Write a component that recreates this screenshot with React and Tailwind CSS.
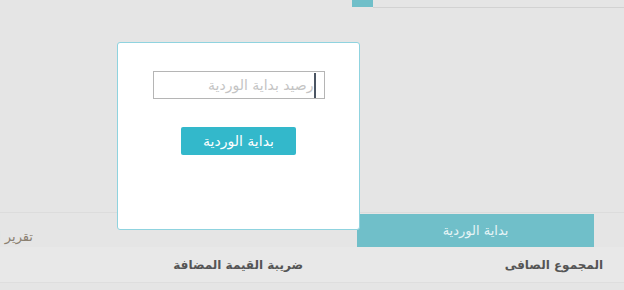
import React from "react";

const font = { fontFamily: '"DejaVu Sans", "Noto Sans", sans-serif' };

function ShiftModal() {
  return (
    <div className="absolute left-[117px] top-[42px] w-[243px] h-[188px] bg-white border border-[#8fd3df] rounded-[3px] flex flex-col items-center">
      <div className="mt-[28px] w-[172px] h-[28px] border border-[#b5b5b5] bg-white flex items-center justify-end pr-[8px] overflow-hidden">
        <div className="flex items-center" dir="rtl">
          <span className="w-[2px] h-[25px] bg-[#4b5563]"></span>
          <span className="text-[14px] text-[#c4c4c4] whitespace-nowrap">رصيد بداية الوردية</span>
        </div>
      </div>
      <button className="mt-[28px] w-[115px] h-[28px] bg-[#33b8cb] text-white text-[14px] rounded-[2px]">
        بداية الوردية
      </button>
    </div>
  );
}

export default function App() {
  return (
    <div className="relative w-[624px] h-[290px] bg-[#e5e5e5] overflow-hidden" style={font}>
      {/* top strip */}
      <div className="flex h-[8px]">
        <div className="w-[352px]"></div>
        <div className="w-[21px] h-[7px] bg-[#70bfc9]"></div>
        <div className="flex-1 border-b border-[#d2d2d2]"></div>
      </div>

      <div className="h-[205px] border-b border-[#dcdcdc]"></div>

      {/* tabs row */}
      <div className="flex h-[34px] items-end">
        <div className="w-[33px] overflow-hidden flex justify-end">
          <span className="text-[13px] text-[#8a7f70] whitespace-nowrap pb-[1px]" dir="rtl">تقرير المبيعات</span>
        </div>
        <div className="w-[324px]"></div>
        <div className="w-[237px] h-[33px] bg-[#70bfc9] flex items-center justify-center text-[13px] text-[#e6f4f6]">
          بداية الوردية
        </div>
      </div>

      {/* table header */}
      <div className="flex h-[36px] bg-[#e8e8e8] border-b border-[#dedede] items-center text-[12px] font-bold text-[#555]" dir="rtl">
        <div className="w-[321px] pr-[21px]">المجموع الصافى</div>
        <div className="w-[300px]">ضريبة القيمة المضافة</div>
      </div>

      <ShiftModal />
    </div>
  );
}
